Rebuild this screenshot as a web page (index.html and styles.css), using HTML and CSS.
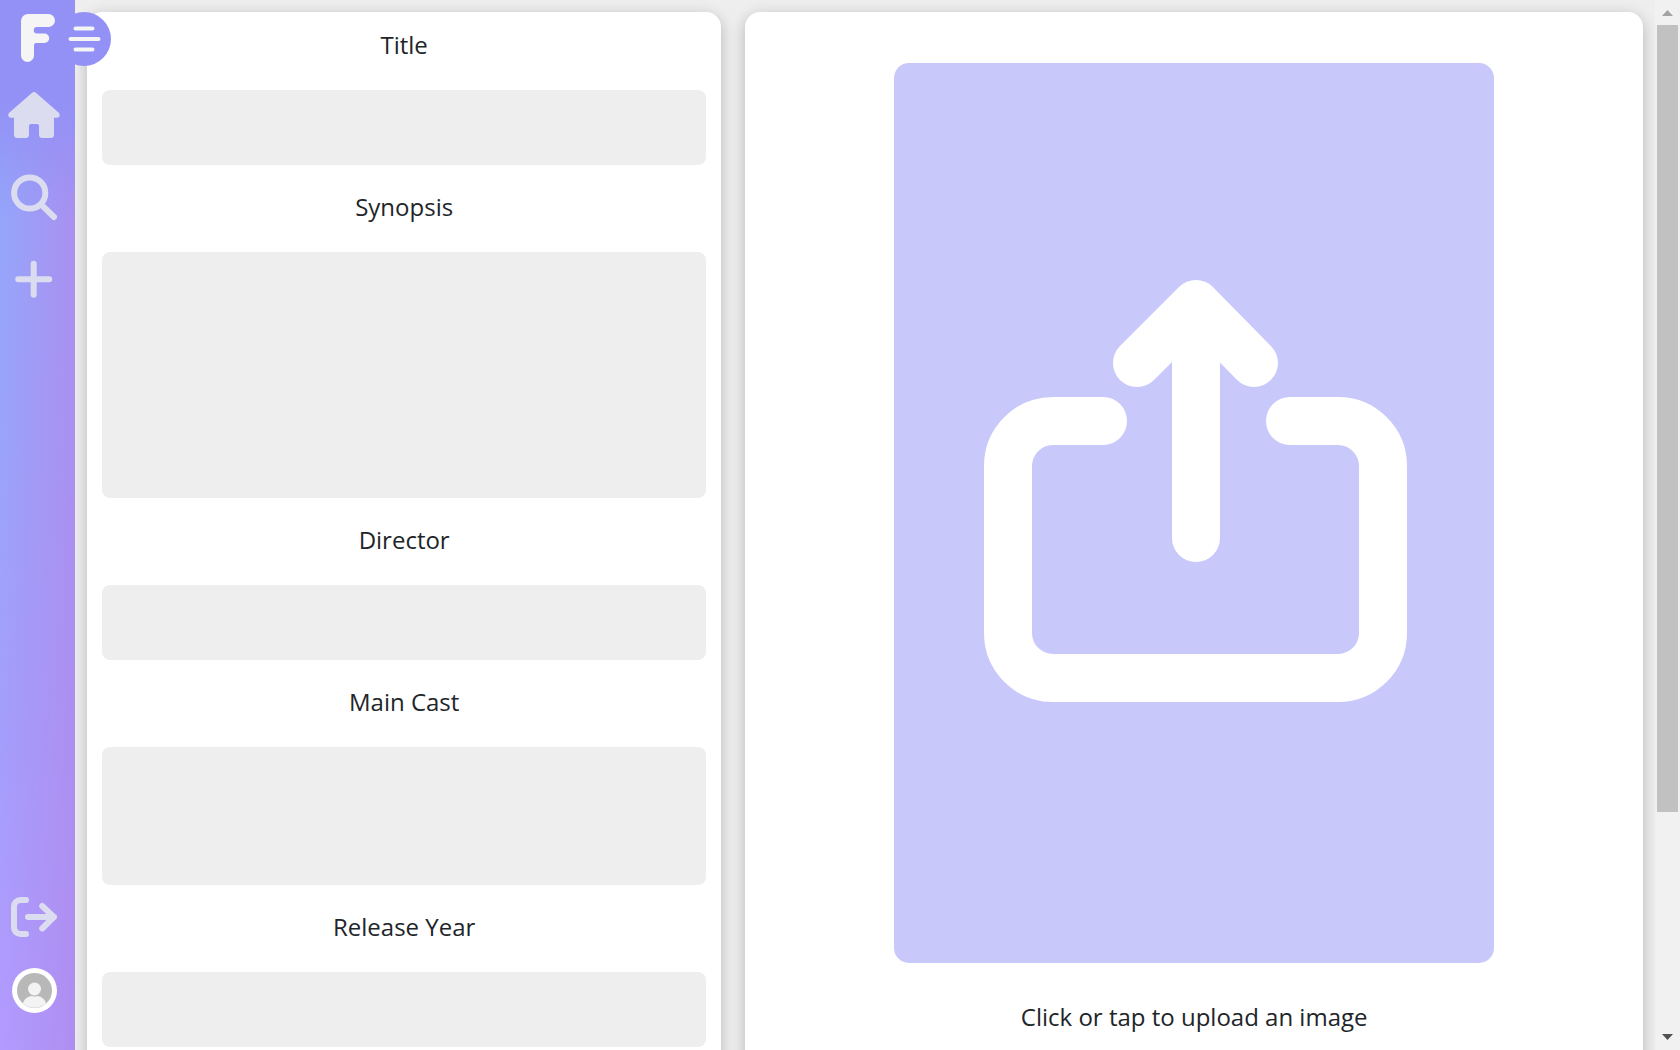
FILE: index.html
```html
<!DOCTYPE html>
<html lang="en">
<head>
<meta charset="utf-8">
<meta name="viewport" content="width=device-width, initial-scale=1">
<title>Add a film</title>
<link rel="stylesheet" href="styles.css">
</head>
<body>
<div class="app">
  <nav class="sidebar" aria-label="Main">
    <a class="logo" href="#" aria-label="Start">
      <svg class="icon" viewBox="0 0 60 60"><path fill="#f5f5f5" d="M24 6H44.500a6.500 6.500 0 0 1 0 13H33a2.800 2.800 0 0 0 0 6.500h7.500a4.700 4.700 0 0 1 0 9.500H32a2 2 0 0 0-2 2V47.500a6.500 6.500 0 0 1-13 0V13a7 7 0 0 1 7-7z"/></svg>
    </a>
    <button class="toggle" type="button" aria-label="Open menu">
      <svg viewBox="0 0 54 54" width="54" height="54"><path d="M18.500 16.500h17M13.500 27h28M18.500 37.500h17" stroke="#f5f5f5" stroke-width="4" stroke-linecap="round"/></svg>
    </button>
    <div class="links">
      <a href="#" aria-label="Home">
        <svg class="icon" viewBox="0 0 60 60"><path fill="currentColor" d="M27.800 8a3.300 3.300 0 0 1 4.400 0L54.800 27.800C56.600 29.800 55.600 32.800 53.200 32.800H50V49.500a3.500 3.500 0 0 1-3.500 3.500h-8A3.500 3.500 0 0 1 35 49.500V41a2 2 0 0 0-2-2h-6a2 2 0 0 0-2 2v8.500a3.500 3.500 0 0 1-3.500 3.500h-8A3.500 3.500 0 0 1 10 49.500V32.800H6.800C4.400 32.800 3.400 29.800 5.200 27.800z"/></svg>
      </a>
      <a href="#" aria-label="Search">
        <svg class="icon" viewBox="0 0 60 60" fill="none" stroke="currentColor" stroke-width="6" stroke-linecap="round"><circle cx="25.700" cy="26" r="15.600"/><path d="M37.500 37.800 50 50"/></svg>
      </a>
      <a href="#" aria-label="Add">
        <svg class="icon" viewBox="0 0 60 60" stroke="currentColor" stroke-width="6" stroke-linecap="round"><path d="M29.700 14.800v31M14.200 30.300h31"/></svg>
      </a>
    </div>
    <div class="account">
      <a href="#" aria-label="Log out">
        <svg class="icon" viewBox="0 0 60 60" fill="none" stroke="currentColor" stroke-width="6" stroke-linecap="round" stroke-linejoin="round"><path d="M22 13h-5.500a6.500 6.500 0 0 0-6.500 6.500v21a6.500 6.500 0 0 0 6.500 6.500H22M24 30h26M38.200 19 49.800 30 38.200 41.500"/></svg>
      </a>
      <a href="#" aria-label="Profile">
        <svg class="icon" viewBox="0 0 60 60"><circle cx="30.500" cy="30.500" r="22.500" fill="#fff"/><circle cx="30.500" cy="30.500" r="17.500" fill="#b8b8b8"/><path fill="#f3f3f3" d="M18.800 43.300C20.500 39 24 36 28 36q2.500 1 5 0c4 0 7.500 3 9.200 7.300A17.500 17.500 0 0 1 18.800 43.300z"/><circle cx="30.500" cy="29" r="6.500" fill="#f3f3f3"/></svg>
      </a>
    </div>
  </nav>

  <main class="content">
    <div class="column">
      <form class="card details">
        <label for="title">Title</label>
        <input id="title" type="text">
        <label for="synopsis">Synopsis</label>
        <textarea id="synopsis" class="tall"></textarea>
        <label for="director">Director</label>
        <input id="director" type="text">
        <label for="cast">Main Cast</label>
        <textarea id="cast"></textarea>
        <label for="year">Release Year</label>
        <input id="year" type="text">
      </form>
    </div>
    <div class="column">
      <section class="card poster">
        <label class="upload">
          <input class="file" type="file" accept="image/*">
          <svg viewBox="0 0 600 900"><rect width="600" height="900" rx="15" fill="#c8c8fb"/><g fill="none" stroke="#fff" stroke-width="48" stroke-linecap="round" stroke-linejoin="round"><path d="M302 475V241M243 300l59-59 58 59"/><path d="M209 358h-50a45 45 0 0 0-45 45v167a45 45 0 0 0 45 45h285a45 45 0 0 0 45-45V403a45 45 0 0 0-45-45h-48"/></g></svg>
          <span>Click or tap to upload an image</span>
        </label>
      </section>
    </div>
  </main>

  <div class="scrollbar" aria-hidden="true">
    <svg viewBox="0 0 25 25"><path fill="#a3a3a3" d="M7 16h11l-5.500-6z"/></svg>
    <div class="track"><div class="thumb"></div></div>
    <svg viewBox="0 0 25 25"><path fill="#505050" d="M7 9h11l-5.500 6z"/></svg>
  </div>
</div>
</body>
</html>
```
FILE: styles.css
```css
*, *::before, *::after { box-sizing: border-box; }

body {
  margin: 0;
  background: #eee;
  color: #212529;
  font: 24px/36px "Open Sans", sans-serif;
}

svg { display: block; }

.app {
  display: grid;
  grid-template-columns: 75px 1fr 25px;
  height: 100vh;
  overflow: hidden;
}

.sidebar {
  position: relative;
  z-index: 1;
  display: flex;
  flex-direction: column;
  padding: 8px 11px 30px 4px;
  color: #dcdcf0;
  background:
    linear-gradient(#9391f6 100px, #9391f600 220px),
    linear-gradient(90deg, #ae8bee00, #ae8beed0),
    linear-gradient(#94a6fa 200px, #9aa4fa 450px, #a59efb 750px, #b29bfe);
}

.sidebar a { display: block; color: inherit; }
.icon { width: 60px; height: 60px; }

.toggle {
  position: absolute;
  top: 12px;
  left: 57px;
  width: 54px;
  height: 54px;
  padding: 0;
  border: 0;
  border-radius: 50%;
  background: #9391f6;
}

.links {
  display: flex;
  flex-direction: column;
  gap: 22px;
  margin-top: 17px;
}

.account {
  display: flex;
  flex-direction: column;
  gap: 13px;
  margin-top: auto;
}

.content {
  display: grid;
  grid-template-columns: 5fr 7fr;
  overflow: hidden;
}

.column {
  display: flex;
  flex-direction: column;
  padding: 12px;
}

.card {
  flex: 1 0 auto;
  border-radius: 15px;
  background: #fff;
  box-shadow: 0 4px 15px rgba(0, 0, 0, .24);
  text-align: center;
}

.details {
  display: flex;
  flex-direction: column;
  padding: 15px 15px 120px;
}

.details label { margin-bottom: 27px; }

.details input,
.details textarea {
  height: 75px;
  margin: 0 0 24px;
  padding: 12px;
  border: 0;
  border-radius: 8px;
  background: #eee;
  color: inherit;
  font: inherit;
  resize: none;
}

.details textarea { height: 138px; }
.details .tall { height: 246px; }

.poster { padding: 51px 24px; }

.upload {
  display: flex;
  flex-direction: column;
  gap: 36px;
  max-width: 600px;
  margin: 0 auto;
  cursor: pointer;
}

.file {
  position: absolute;
  width: 1px;
  height: 1px;
  opacity: 0;
}

.scrollbar {
  display: flex;
  flex-direction: column;
  background: #f1f1f1;
}

.track {
  flex: 1;
  padding: 0 2px;
}

.thumb {
  height: 787px;
  max-height: 100%;
  background: #c1c1c1;
}
```
